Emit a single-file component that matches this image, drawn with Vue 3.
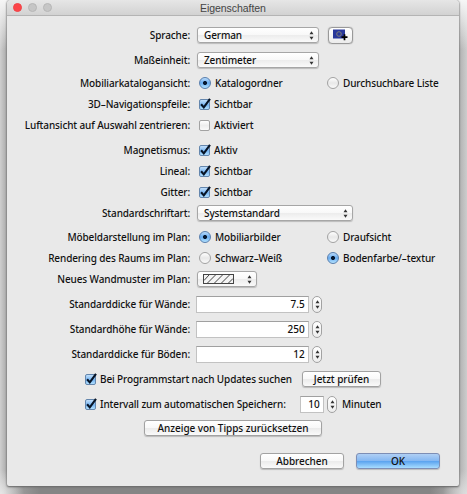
<script setup>
import { h } from 'vue'

const tick = {
  render: () => h('svg', { viewBox: '0 0 15 15', width: 15, height: 15 }, [
    h('path', { d: 'M3.1 7.3 L5.8 10.4 L12 1.8', fill: 'none', stroke: '#071426', 'stroke-width': 2.1 })
  ])
}
const Arrows = {
  render: () => h('svg', { viewBox: '0 0 5 9', width: 5, height: 9 }, [
    h('path', { d: 'M2.5 0.3 L4.5 3.3 H0.5 Z M2.5 8.7 L4.5 5.7 H0.5 Z', fill: '#333' })
  ])
}
const rows = [
  { label: 'Sprache:', select: 'German', size: 'medium', flag: true, gap: 'g9' },
  { label: 'Maßeinheit:', select: 'Zentimeter', size: 'medium', gap: 'g5' },
  { label: 'Mobiliarkatalogansicht:', radios: ['Katalogordner', 'Durchsuchbare Liste'], on: 0, gap: 'g3' },
  { label: '3D–Navigationspfeile:', check: 'Sichtbar', checked: true, gap: 'g1' },
  { label: 'Luftansicht auf Auswahl zentrieren:', check: 'Aktiviert', checked: false, gap: 'g1' },
  { label: 'Magnetismus:', check: 'Aktiv', checked: true, gap: 'g5' },
  { label: 'Lineal:', check: 'Sichtbar', checked: true, gap: 'g1' },
  { label: 'Gitter:', check: 'Sichtbar', checked: true, gap: 'g1' },
  { label: 'Standardschriftart:', select: 'Systemstandard', size: 'wide', gap: 'g1' },
  { label: 'Möbeldarstellung im Plan:', radios: ['Mobiliarbilder', 'Draufsicht'], on: 0, gap: 'g4' },
  { label: 'Rendering des Raums im Plan:', radios: ['Schwarz–Weiß', 'Bodenfarbe/–textur'], on: 1, gap: 'g1' },
  { label: 'Neues Wandmuster im Plan:', pattern: true, gap: 'g1' },
  { label: 'Standarddicke für Wände:', value: '7.5', gap: 'g5' },
  { label: 'Standardhöhe für Wände:', value: '250', gap: 'g5' },
  { label: 'Standarddicke für Böden:', value: '12', gap: 'g5' }
]
</script>

<template>
  <div class="desktop">
    <div class="window">
      <header class="titlebar">
        <i class="light close"></i><i class="light"></i><i class="light"></i>
        <span class="title">Eigenschaften</span>
      </header>
      <div v-for="r in rows" :key="r.label" class="row" :class="r.gap">
        <div class="label">{{ r.label }}</div>
        <div v-if="r.select" class="popup" :class="r.size">
          <span>{{ r.select }}</span><Arrows />
        </div>
        <button v-if="r.flag" class="flag">
          <svg width="16" height="12" viewBox="0 0 16 12">
            <rect x="0" y="0.5" width="12" height="9" fill="#29389b" />
            <circle cx="6" cy="5" r="2.3" fill="none" stroke="#807f78" stroke-width="1" />
            <path d="M11.5 5.2v6M8.5 8.2h6" stroke="#000" stroke-width="1.7" />
          </svg>
        </button>
        <template v-if="r.radios">
          <div v-for="(t, i) in r.radios" :key="t" class="option radio-option">
            <i class="radio" :class="{ on: r.on === i }"></i><span>{{ t }}</span>
          </div>
        </template>
        <div v-if="r.check" class="option">
          <i class="check" :class="{ on: r.checked }"><tick v-if="r.checked" /></i><span>{{ r.check }}</span>
        </div>
        <div v-if="r.pattern" class="popup small">
          <svg class="hatch" width="31" height="10" viewBox="0 0 31 10">
            <rect x=".5" y=".5" width="30" height="9" fill="#f4f4f4" stroke="#444" />
            <path d="M1 6.5 L6 1 M4.5 9 L12.5 1 M11.5 9 L19.5 1 M18.5 9 L26.5 1 M25.5 9 L30 4.5" stroke="#444" />
          </svg><Arrows />
        </div>
        <template v-if="r.value">
          <div class="field">{{ r.value }}</div>
          <div class="stepper"><Arrows /></div>
        </template>
      </div>

      <div class="row g5 extra">
        <i class="check on"><tick /></i><span class="updates">Bei Programmstart nach Updates suchen</span>
        <button class="button test">Jetzt prüfen</button>
      </div>
      <div class="row g5 extra">
        <i class="check on"><tick /></i><span class="interval">Intervall zum automatischen Speichern:</span>
        <div class="field tiny">10</div>
        <div class="stepper"><Arrows /></div>
        <span class="minutes">Minuten</span>
      </div>
      <div class="row g4 reset"><button class="button">Anzeige von Tipps zurücksetzen</button></div>
      <footer class="row actions">
        <button class="button">Abbrechen</button>
        <button class="button primary">OK</button>
      </footer>
    </div>
  </div>
</template>

<style>
body { overflow: hidden; }
</style>
<style scoped>
* { box-sizing: border-box; }
.desktop {
  width: 467px; height: 494px; padding: 0 8px 9px 7px; overflow: hidden;
  background: radial-gradient(circle at 0 494px, #e6e6e6, transparent 24px), radial-gradient(circle at 467px 494px, #ddd, transparent 24px), linear-gradient(#f6f6f6, transparent 50px), linear-gradient(90deg, #cfcfcf, #a9a9a9 7px, #858585 40px, #858585 430px, #b0b0b0 459px, #cdcdcd);
  font: 500 10px/14px "Noto Sans", "Open Sans", sans-serif;
  letter-spacing: -.12px;
  color: #111;
}
.window {
  width: 452px; height: 486px; background: #e9e9e9;
  border-radius: 4px 4px 2px 2px; overflow: hidden;
  box-shadow: 0 0 2px #777, 0 1px 2px #666;
}
.titlebar {
  height: 16px; display: flex; align-items: center; padding-left: 6px; gap: 6px;
  background: linear-gradient(#e6e6e6, #d2d2d2); border-bottom: 1px solid #b4b4b4;
}
.light { width: 9px; height: 9px; border-radius: 50%; background: #c6c6c6; border: 1px solid #b6b6b6; }
.close { background: #fc4549; border-color: #ef4448; }
.title { margin-left: 142px; font: 10.5px/14px "Liberation Sans", sans-serif; color: #444; letter-spacing: -.05px; }
.row { display: flex; height: 20px; align-items: center; white-space: nowrap; }
.g1 { margin-top: 1px; } .g3 { margin-top: 3px; } .g4 { margin-top: 4px; } .g5 { margin-top: 5px; } .g9 { margin-top: 9px; }
.label { width: 183px; margin-right: 7px; text-align: right; }
.popup {
  height: 16px; display: flex; align-items: center; justify-content: space-between; padding: 0 4px 0 6px;
  border: 1px solid #a6a6a6; border-radius: 3px; background: linear-gradient(#fff, #f8f8f8 50%, #ececec 51%, #fafafa);
  box-shadow: 0 1px 1px #bbb;
}
.medium { width: 122px; }
.wide { width: 156px; }
.small { width: 60px; padding-left: 5px; }
.flag {
  width: 25px; height: 17px; margin-left: 9px; padding: 0 0 0 4px; display: flex; align-items: center;
  border: 1px solid #999; border-radius: 4px; background: linear-gradient(#fff, #ececec); box-shadow: 0 0 1px #777;
}
.option { display: flex; align-items: center; padding-left: 2px; gap: 4px; }
.radio-option { width: 128px; }
.radio {
  width: 12px; height: 12px; flex: none; border-radius: 50%; border: 1px solid #a2a2a2;
  background: linear-gradient(#fff, #e8e8e8 50%, #fafafa);
}
.radio.on {
  border-color: #597fae;
  background: radial-gradient(circle, #071830 0 1.6px, transparent 2.4px), linear-gradient(#b9dafa, #67abf0 50%, #b4e3ff);
}
.check {
  width: 11px; height: 11px; flex: none; border-radius: 2px; border: 1px solid #a2a2a2;
  background: linear-gradient(#fff, #eee 50%, #fafafa); position: relative;
}
.check.on { border-color: #6486ad; background: linear-gradient(#c1dffb, #77b5f2 55%, #b0dfff); }
.check svg { position: absolute; left: -2px; top: -3px; }
.field {
  width: 113px; height: 17px; background: #fff; border: 1px solid #c2c2c2; border-top-color: #a0a0a0;
  text-align: right; line-height: 15px; padding-right: 3px; margin-left: -1px; letter-spacing: .15px;
}
.stepper {
  width: 10px; height: 17px; margin-left: 3px; border: 1px solid #a2a2a2; border-radius: 5px;
  background: linear-gradient(#fff, #ededed); display: flex; align-items: center; justify-content: center;
}
.extra { padding-left: 78px; }
.extra .check { margin-right: 4px; }
.updates { width: 202px; }
.interval { width: 200px; }
.tiny { width: 24px; margin-left: 0; }
.minutes { margin-left: 5px; }
.button {
  height: 16px; padding: 0; border: 1px solid #a2a2a2; border-radius: 3px; font: inherit; letter-spacing: -.05px; line-height: 14px; color: #111;
  background: linear-gradient(#fff, #f8f8f8 50%, #ebebeb 51%, #fafafa); box-shadow: 0 1px 1px #bbb;
}
.test { width: 79px; }
.reset { padding-left: 137px; }
.reset .button { width: 178px; }
.actions { margin-top: 13px; padding-left: 253px; gap: 12px; }
.actions .button { width: 84px; }
.actions .primary { border-color: #7d8eb5; background: linear-gradient(#b0cff4, #85b8f2 48%, #5ba3ef 52%, #a8dcff); }
</style>
